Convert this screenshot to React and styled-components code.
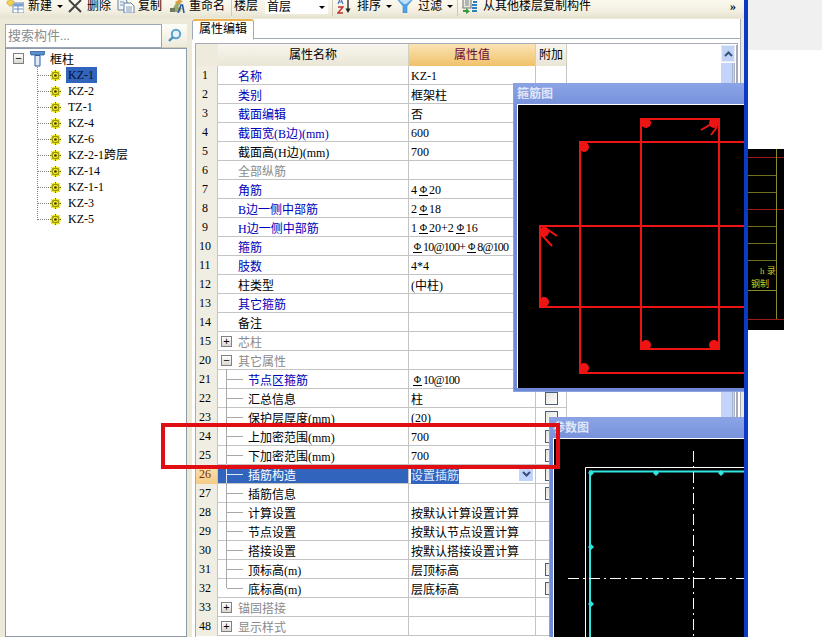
import React from 'react';
import styled, { createGlobalStyle } from 'styled-components';

const GlobalStyle = createGlobalStyle`
  html, body { margin: 0; padding: 0; background: #fff; }
  body {
    font-family: "Liberation Serif", "Noto Sans CJK SC", serif;
    font-size: 12px;
    color: #000;
  }
`;

const treeItems = ['KZ-1', 'KZ-2', 'TZ-1', 'KZ-4', 'KZ-6', 'KZ-2-1跨层', 'KZ-14', 'KZ-1-1', 'KZ-3', 'KZ-5'];

// tone: blue = 公共属性, gray = 分组/不可编辑, plain = 私有属性
const rows = [
  { no: 1, name: '名称', value: 'KZ-1', tone: 'blue' },
  { no: 2, name: '类别', value: '框架柱', tone: 'blue' },
  { no: 3, name: '截面编辑', value: '否', tone: 'blue' },
  { no: 4, name: '截面宽(B边)(mm)', value: '600', tone: 'blue' },
  { no: 5, name: '截面高(H边)(mm)', value: '700', tone: 'plain' },
  { no: 6, name: '全部纵筋', tone: 'gray' },
  { no: 7, name: '角筋', value: ['4', 'Φ', '20'], tone: 'blue' },
  { no: 8, name: 'B边一侧中部筋', value: ['2', 'Φ', '18'], tone: 'blue' },
  { no: 9, name: 'H边一侧中部筋', value: ['1', 'Φ', '20+2', 'Φ', '16'], tone: 'blue' },
  { no: 10, name: '箍筋', value: ['', 'Φ', '10@100+', 'Φ', '8@100'], tone: 'blue' },
  { no: 11, name: '肢数', value: '4*4', tone: 'blue' },
  { no: 12, name: '柱类型', value: '(中柱)', tone: 'plain' },
  { no: 13, name: '其它箍筋', tone: 'blue' },
  { no: 14, name: '备注', tone: 'plain' },
  { no: 15, name: '芯柱', tone: 'gray', group: '+' },
  { no: 20, name: '其它属性', tone: 'gray', group: '−' },
  { no: 21, name: '节点区箍筋', value: ['', 'Φ', '10@100'], tone: 'blue', child: true },
  { no: 22, name: '汇总信息', value: '柱', child: true, check: true },
  { no: 23, name: '保护层厚度(mm)', value: '(20)', child: true, check: true },
  { no: 24, name: '上加密范围(mm)', value: '700', child: true, check: true },
  { no: 25, name: '下加密范围(mm)', value: '700', child: true, check: true },
  { no: 26, name: '插筋构造', value: '设置插筋', child: true, check: true, active: true },
  { no: 27, name: '插筋信息', child: true, check: true },
  { no: 28, name: '计算设置', value: '按默认计算设置计算', child: true },
  { no: 29, name: '节点设置', value: '按默认节点设置计算', child: true },
  { no: 30, name: '搭接设置', value: '按默认搭接设置计算', child: true },
  { no: 31, name: '顶标高(m)', value: '层顶标高', child: true, check: true },
  { no: 32, name: '底标高(m)', value: '层底标高', child: true, check: true, last: true },
  { no: 33, name: '锚固搭接', tone: 'gray', group: '+' },
  { no: 48, name: '显示样式', tone: 'gray', group: '+' },
];

const toneColor = { blue: '#0000b8', gray: '#8a8a8a', plain: '#000' };

const Page = styled.div`
  display: flex;
  width: 822px;
  height: 637px;
  overflow: hidden;
`;

const Main = styled.div`
  position: relative;
  width: 744px;
  height: 637px;
  overflow: hidden;
  background: #ece9d8;
  flex: none;
`;

const BlueEdge = styled.div`
  width: 4px;
  flex: none;
  background: #0b3ac4;
`;

const RightPane = styled.div`
  flex: 1;
  background: #fff;
`;

const GrayStrip = styled.div`
  height: 50px;
  background: #f0f0f0;
  margin-bottom: 99px;
`;

const CadPiece = styled.svg`
  display: block;
  width: 36px;
  height: 181px;
  background: #000;
`;

const Toolbar = styled.div`
  display: flex;
  align-items: flex-start;
  height: 18px;
  background: linear-gradient(#fbf9ef, #f3f0e2 60%, #e6e2cf);
  font-size: 12px;
  line-height: 12px;
  position: relative;
`;

const ToolItem = styled.div`
  display: flex;
  align-items: center;
  height: 12px;
  margin-left: ${p => p.$ml || 0}px;
  white-space: nowrap;
  flex: none;
`;

const ToolLabel = styled.span`
  margin-left: ${p => p.$ml || 0}px;
`;

const Caret = styled.span`
  width: 0;
  height: 0;
  margin-left: ${p => p.$ml || 5}px;
  border-left: 3px solid transparent;
  border-right: 3px solid transparent;
  border-top: 3px solid #000;
`;

const ToolSep = styled.div`
  width: 1px;
  height: 16px;
  margin-left: ${p => p.$ml || 0}px;
  background: #cfcbb6;
  flex: none;
`;

const FloorSelect = styled.div`
  display: flex;
  align-items: center;
  justify-content: space-between;
  width: 63px;
  height: 14px;
  margin-left: 7px;
  padding: 0 3px 0 2px;
  box-sizing: border-box;
  background: #fff;
  flex: none;
`;

const More = styled.span`
  position: absolute;
  left: 730px;
  top: 0;
  font-size: 12px;
  line-height: 12px;
  font-weight: bold;
`;

const Body = styled.div`
  display: flex;
  align-items: flex-start;
  height: 619px;
`;

const LeftPanel = styled.div`
  width: 182px;
  margin: 6px 0 0 5px;
  flex: none;
`;

const SearchRow = styled.div`
  display: flex;
  height: 24px;
  background: #fff;
`;

const SearchInput = styled.div`
  width: 157px;
  height: 24px;
  box-sizing: border-box;
  border: 1px solid #9aa5b5;
  color: #8c8c8c;
  font-size: 13px;
  line-height: 21px;
  padding-left: 2px;
  background: #fff;
`;

const SearchButton = styled.div`
  display: flex;
  align-items: center;
  justify-content: center;
  flex: 1;
  background: linear-gradient(#fdfdf8, #eeebdc);
  border-bottom: 1px solid #cfcbb6;
`;

const TreePanel = styled.div`
  height: 589px;
  box-sizing: border-box;
  background: #fff;
  border: 1px solid #8f9aa8;
  padding: 1px 0 0 7px;
`;

const TreeRoot = styled.div`
  display: flex;
  align-items: center;
  height: 17px;
  font-size: 12px;
`;

const ExpandBox = styled.span`
  display: flex;
  align-items: center;
  justify-content: center;
  width: 9px;
  height: 9px;
  border: 1px solid #808080;
  background: linear-gradient(#fff, #d8d8d0);
  font: 11px/9px "Liberation Sans", sans-serif;
  color: #000;
  flex: none;
`;

const TreeRootLabel = styled.span`
  margin-left: 5px;
`;

const TreeList = styled.div`
  position: relative;
  margin-left: 24px;

  &::before {
    content: '';
    position: absolute;
    left: 0;
    top: 0;
    height: 153px;
    border-left: 1px dotted #808080;
  }
`;

const TreeRow = styled.div`
  display: flex;
  align-items: center;
  height: 16px;
  padding-left: 13px;
  position: relative;

  &::before {
    content: '';
    position: absolute;
    left: 0;
    top: 8px;
    width: 12px;
    border-top: 1px dotted #808080;
  }
`;

const TreeLabel = styled.span`
  margin-left: 5px;
  padding: 0 2px;
  line-height: 16px;
  min-width: 27px;
  background: ${p => (p.$selected ? '#3165bd' : 'transparent')};
  color: ${p => (p.$selected ? '#0a1030' : '#000')};
  white-space: nowrap;
`;

const Editor = styled.div`
  width: 548px;
  margin: 1px 0 0 5px;
  background: #fff;
  height: 618px;
  border-right: 1px solid #a9adb5;
  flex: none;
  box-sizing: content-box;
`;

const TabStrip = styled.div`
  height: 19px;
  border-bottom: 1px solid #a2a9b8;
  background: #fff;
`;

const Tab = styled.div`
  width: 60px;
  height: 18px;
  box-sizing: content-box;
  border: 1px solid #a2a9b8;
  border-top: 2px solid #eeb04a;
  border-bottom: 1px solid #fff;
  border-radius: 3px 3px 0 0;
  text-align: center;
  line-height: 17px;
  background: #fff;
`;

const GridFrame = styled.div`
  display: flex;
  justify-content: space-between;
  margin: 4px 2px 0 3px;
  border: 1px solid #a7abb8;
  border-bottom: none;
  height: 600px;
  box-sizing: border-box;
`;

const Table = styled.div`
  width: 371px;
  flex: none;
`;

const RowGrid = styled.div`
  display: grid;
  grid-template-columns: 22px 191px 127px 31px;
  height: 19px;
  box-sizing: border-box;
  border-bottom: 1px solid #c4c4c4;
`;

const HeaderRow = styled(RowGrid)`
  height: 22px;
  border-bottom: none;
`;

const HeaderCorner = styled.div`
  background: #eeebdc;
`;

const HeaderCell = styled.div`
  display: flex;
  align-items: center;
  justify-content: center;
  padding-bottom: 2px;
  box-sizing: border-box;
  background: ${p => (p.$hot ? 'linear-gradient(#fbe3b4, #f0c26a)' : 'linear-gradient(#f8f6ee, #e9e6d6)')};
  color: ${p => (p.$hot ? '#6a0a3c' : '#000')};
  border-right: 1px solid #d4d0c0;
`;

const NumberCell = styled.div`
  background: ${p => (p.$active ? 'linear-gradient(#fbe3b4, #f3cc86)' : '#f0eee2')};
  color: ${p => (p.$active ? '#7a3000' : '#000')};
  padding-left: ${p => (p.$wide ? 3 : 6)}px;
  line-height: 19px;
  border-right: 1px solid #c4c4c4;
`;

const NameCell = styled.div`
  position: relative;
  display: flex;
  align-items: center;
  height: 18px;
  box-sizing: border-box;
  padding: 2px 0 0 ${p => (p.$child ? 30 : p.$group ? 3 : 20)}px;
  background: ${p => (p.$active ? '#3165bd' : '#fff')};
  color: ${p => (p.$active ? '#fff' : toneColor[p.$tone] || '#000')};
  border-right: 1px solid #c4c4c4;
  white-space: nowrap;
`;

// 树状连线，子行才有
const TreeStem = styled.span`
  position: absolute;
  left: 8px;
  top: -1px;
  bottom: ${p => (p.$last ? '9px' : '-1px')};
  width: 16px;
  border-left: 1px solid ${p => (p.$active ? '#dfe8ff' : '#a8a8a8')};

  &::after {
    content: '';
    position: absolute;
    left: 0;
    top: 10px;
    width: 16px;
    border-top: 1px solid ${p => (p.$active ? '#dfe8ff' : '#a8a8a8')};
  }
`;

const GroupBox = styled(ExpandBox)`
  margin-right: 6px;
  margin-top: -2px;
`;

const ValueCell = styled.div`
  position: relative;
  display: flex;
  align-items: center;
  height: 18px;
  box-sizing: border-box;
  padding: 2px 0 0 2px;
  background: #fff;
  border-right: 1px solid #c4c4c4;
  white-space: nowrap;
`;

const Rebar = styled.span`
  display: inline-block;
  width: 9px;
  text-align: center;
  line-height: 11px;
  border-bottom: 1px solid #000;
  font-size: 10px;
  margin: 0 1px 0 2px;
`;

const ValuePart = styled.span`
  letter-spacing: ${p => (p.$tight ? '-0.8px' : '0')};
`;

const SelectedText = styled.span`
  background: #3165bd;
  color: #dfe8ff;
`;

const ComboArrow = styled.span`
  position: absolute;
  right: 2px;
  top: 2px;
  display: flex;
  align-items: center;
  justify-content: center;
  width: 14px;
  height: 14px;
  background: #c3d3fb;
`;

const AttachCell = styled.div`
  display: flex;
  align-items: center;
  justify-content: center;
  height: 18px;
  background: #fff;
  border-right: 1px solid #c4c4c4;
`;

const CheckBox = styled.span`
  width: 11px;
  height: 11px;
  border: 1px solid #47607f;
  background: linear-gradient(135deg, #e4e4de, #fff);
`;

const ScrollBar = styled.div`
  width: 14px;
  display: flex;
  flex-direction: column;
  margin-top: 1px;
  flex: none;
  border-right: 1px solid #a7abb8;
  padding-right: 1px;
`;

const ScrollButton = styled.div`
  display: flex;
  align-items: center;
  justify-content: center;
  height: 15px;
  background: #c3d3f6;
  border: 1px solid #e6ecfb;
`;

const ScrollThumb = styled.div`
  flex: 1;
  margin-top: 1px;
  background: #c3d3fb;
  border-right: 3px double #a9b4cc;
`;

const FloatWindow = styled.div`
  position: absolute;
  left: ${p => p.$left}px;
  top: ${p => p.$top}px;
  width: ${p => p.$width}px;
  height: ${p => p.$height}px;
  box-sizing: border-box;
  background: linear-gradient(#8aa3e6, #6f8ad6 30px);
  border: 1px solid #8ba2df;
  border-right: none;
  padding: 0 0 4px 3px;
  z-index: 2;
`;

const FloatTitle = styled.div`
  height: 20px;
  line-height: 21px;
  color: #dfe6f8;
  font-weight: bold;
  font-size: 12px;
`;

const CadCanvas = styled.svg`
  display: block;
  width: 100%;
  height: ${p => p.$height}px;
  background: #000;
  border-top: 1px solid #fff;
  border-left: 1px solid #fff;
  box-sizing: border-box;
`;

const RedFrame = styled.div`
  position: absolute;
  left: 161px;
  top: 423px;
  width: 399px;
  height: 46px;
  box-sizing: border-box;
  border: 4px solid #e00d12;
  z-index: 3;
`;

const NewIcon = () => (
  <svg width="18" height="14" viewBox="0 0 18 14">
    <rect x="7" y="4" width="11" height="10" fill="#fff" stroke="#6f8fb8" />
    <rect x="7.5" y="4.5" width="10" height="3" fill="#7aa0d8" />
    <path d="M8 10h9M12 7v7" stroke="#6f8fb8" />
    <path d="M3 0h3v2h2v3H6v2H3V5H1V2h2z" fill="#f6d24a" stroke="#c89a20" strokeWidth=".5" />
  </svg>
);

const DeleteIcon = () => (
  <svg width="14" height="14" viewBox="0 0 14 14">
    <path d="M1 1l12 12M13 1L1 13" stroke="#444" strokeWidth="2" />
  </svg>
);

const CopyIcon = () => (
  <svg width="18" height="14" viewBox="0 0 18 14">
    <path d="M1 0h7l2 2v9H1z" fill="#eef3fa" stroke="#6f8298" />
    <path d="M7 4h7l3 3v7H7z" fill="#fff" stroke="#5a7fb0" />
    <path d="M3 3h4M3 6h3M9 8h6M9 10h6M9 12h6" stroke="#7f95b0" />
  </svg>
);

const RenameIcon = () => (
  <svg width="16" height="14" viewBox="0 0 16 14">
    <path d="M2 13L8 2l4 2-3 4 4 1-2 4z" fill="#9caa6c" />
    <path d="M6 3l5-3 3 3-6 2z" fill="#e0a040" />
    <path d="M9 14l3-8h1.5l1.5 8" fill="none" stroke="#2a56a8" strokeWidth="1.6" />
    <path d="M1 9h5v4H1z" fill="#707a60" />
  </svg>
);

const SortIcon = () => (
  <svg width="14" height="16" viewBox="0 0 14 16">
    <path d="M1 6l2.5-6L6 6M2 4h3" fill="none" stroke="#4a74c8" strokeWidth="1.2" />
    <path d="M1 9h5L1 15h5" fill="none" stroke="#c03030" strokeWidth="1.4" />
    <path d="M11 2v11" stroke="#222" strokeWidth="1.3" />
    <path d="M8.5 10.5L11 15l2.5-4.5z" fill="#222" />
  </svg>
);

const FilterIcon = () => (
  <svg width="16" height="14" viewBox="0 0 16 14">
    <path d="M0 0h16L10 7v7H6V7z" fill="#4fa4e8" stroke="#2f78c0" strokeWidth=".5" />
    <path d="M2 1h12L9 5H7z" fill="#bfe0fa" />
  </svg>
);

const CopyFloorIcon = () => (
  <svg width="16" height="16" viewBox="0 0 16 16">
    <rect x="1" y="0" width="8" height="10" fill="#e8e8e0" stroke="#707070" />
    <path d="M3 3h4M3 5h4M3 7h4" stroke="#808080" />
    <path d="M1 12h3v-2l4 3.5L4 16v-2H1z" fill="#3a9a40" />
    <path d="M11 4h4M10 7h5M10 10h5M10 13h5" stroke="#2f7fc4" strokeWidth="2" />
  </svg>
);

const SearchIcon = () => (
  <svg width="15" height="15" viewBox="0 0 15 15">
    <circle cx="9" cy="6" r="4.2" fill="#e6f3fb" stroke="#5aa2d0" strokeWidth="2" />
    <path d="M6 9l-4 4" stroke="#4a8fc0" strokeWidth="2.4" />
  </svg>
);

const ColumnIcon = () => (
  <svg width="15" height="16" viewBox="0 0 15 16" style={{ marginLeft: 6 }}>
    <path d="M0 .5h15l-1 3.5H1z" fill="#5c8fd0" stroke="#2c5e9c" strokeWidth=".8" />
    <path d="M5 4.500h5V15H5z" fill="#dceafa" stroke="#2c5e9c" />
  </svg>
);

const GearIcon = () => (
  <svg width="11" height="11" viewBox="0 0 11 11" style={{ flex: 'none' }}>
    <circle cx="5.500" cy="5.500" r="5.300" fill="#f4ee10" />
    <path d="M5.500 0v11M0 5.500h11M1.600 1.600l7.800 7.800M9.400 1.600l-7.800 7.800" stroke="#4a4a10" strokeWidth=".8" strokeDasharray="1.400 1" />
    <circle cx="5.500" cy="5.500" r="3.300" fill="#f6f020" stroke="#3a3a10" strokeWidth=".6" />
    <circle cx="5.500" cy="5.500" r="1.300" fill="#303010" />
  </svg>
);

const Chevron = ({ color }) => (
  <svg width="9" height="6" viewBox="0 0 9 6">
    <path d="M1 5l3.500-3.500L8 5" fill="none" stroke={color} strokeWidth="2" />
  </svg>
);

const ChevronDown = () => (
  <svg width="9" height="6" viewBox="0 0 9 6">
    <path d="M1 1l3.500 3.500L8 1" fill="none" stroke="#34507c" strokeWidth="2" />
  </svg>
);

// 箍筋图，坐标相对黑色画布左上角
const hoopDots = [[128, 18], [196, 18], [66, 42], [26, 127], [26, 197], [128, 240], [196, 240], [66, 263]];

const HoopDrawing = () => (
  <CadCanvas $height={284} viewBox="0 0 226 283">
    <g fill="none" stroke="#ee1414" strokeWidth="2">
      <rect x="123" y="14" width="78" height="230" />
      <path d="M226 37H62V268H226" />
      <path d="M226 121H22V202H226" />
      <path d="M200 15l-17 10M199 22l-6 8" />
      <path d="M26 122l13 9M22 128l12 13" />
    </g>
    {hoopDots.map(([x, y]) => (
      <circle key={`${x}-${y}`} cx={x} cy={y} r="5" fill="#ee1414" />
    ))}
  </CadCanvas>
);

const sectionDots = [[37, 34], [102, 34], [167, 34], [37, 108], [37, 165]];

const SectionDrawing = () => (
  <CadCanvas $height={199} viewBox="0 0 190 198">
    <path d="M190 28.500H31.500V198" fill="none" stroke="#fff" />
    <path d="M190 32.500H36V198" fill="none" stroke="#2fe6e0" strokeWidth="2" />
    {sectionDots.map(([x, y]) => (
      <path key={x + y} d={`M${x - 3} ${y}l3-3 3 3-3 3z`} fill="#2fe6e0" />
    ))}
    <path d="M139.500 12V198" stroke="#fff" strokeDasharray="11 4 2 4" />
    <path d="M14 139.500H190" stroke="#fff" strokeDasharray="11 4 2 4" />
  </CadCanvas>
);

const CadScrap = () => (
  <CadPiece viewBox="0 0 36 181">
    {[8, 60, 170].map(y => <path key={y} d={`M0 ${y}.5H36`} stroke="#a01818" />)}
    {[26, 43, 77, 94, 111].map(y => <path key={y} d={`M0 ${y}.5H29`} stroke="#70701c" />)}
    <path d="M0 141.500H29M28.500 0V170" stroke="#8a8a28" />
    <text x="12" y="125" fontSize="9" fill="#c8c820">h 录</text>
    <text x="3" y="138" fontSize="9" fill="#c8c820">钢制</text>
  </CadPiece>
);

const Value = ({ value }) => {
  if (!Array.isArray(value)) return value || null;
  return value.map((part, i) => (part === 'Φ'
    ? <Rebar key={i}>Φ</Rebar>
    : <ValuePart key={i} $tight={part.includes('@')}>{part}</ValuePart>));
};

const PropertyRow = ({ row }) => (
  <RowGrid>
    <NumberCell $active={row.active} $wide={row.no > 9}>{row.no}</NumberCell>
    <NameCell $child={row.child} $group={row.group} $tone={row.tone} $active={row.active}>
      {row.child && <TreeStem $last={row.last} $active={row.active} />}
      {row.group && <GroupBox>{row.group}</GroupBox>}
      {row.name}
    </NameCell>
    <ValueCell>
      {row.active ? <SelectedText>{row.value}</SelectedText> : <Value value={row.value} />}
      {row.active && <ComboArrow><ChevronDown /></ComboArrow>}
    </ValueCell>
    <AttachCell>{row.check && <CheckBox />}</AttachCell>
  </RowGrid>
);

export default function App() {
  return (
    <>
      <GlobalStyle />
      <Page>
        <Main>
          <Toolbar>
            <ToolItem $ml={6}><NewIcon /><ToolLabel $ml={4}>新建</ToolLabel><Caret /></ToolItem>
            <ToolItem $ml={5}><DeleteIcon /><ToolLabel $ml={5}>删除</ToolLabel></ToolItem>
            <ToolItem $ml={6}><CopyIcon /><ToolLabel $ml={3}>复制</ToolLabel></ToolItem>
            <ToolItem $ml={7}><RenameIcon /><ToolLabel $ml={4}>重命名</ToolLabel></ToolItem>
            <ToolSep $ml={6} />
            <ToolItem $ml={2}>楼层</ToolItem>
            <FloorSelect>首层<Caret /></FloorSelect>
            <ToolSep $ml={4} />
            <ToolItem $ml={4}><SortIcon /><ToolLabel $ml={6}>排序</ToolLabel><Caret /></ToolItem>
            <ToolItem $ml={5}><FilterIcon /><ToolLabel $ml={5}>过滤</ToolLabel><Caret /></ToolItem>
            <ToolSep $ml={4} />
            <ToolItem $ml={4}><CopyFloorIcon /><ToolLabel $ml={5}>从其他楼层复制构件</ToolLabel></ToolItem>
            <More>»</More>
          </Toolbar>
          <Body>
            <LeftPanel>
              <SearchRow>
                <SearchInput>搜索构件...</SearchInput>
                <SearchButton><SearchIcon /></SearchButton>
              </SearchRow>
              <TreePanel>
                <TreeRoot>
                  <ExpandBox>−</ExpandBox>
                  <ColumnIcon />
                  <TreeRootLabel>框柱</TreeRootLabel>
                </TreeRoot>
                <TreeList>
                  {treeItems.map((item, i) => (
                    <TreeRow key={item}>
                      <GearIcon />
                      <TreeLabel $selected={i === 0}>{item}</TreeLabel>
                    </TreeRow>
                  ))}
                </TreeList>
              </TreePanel>
            </LeftPanel>
            <Editor>
              <TabStrip><Tab>属性编辑</Tab></TabStrip>
              <GridFrame>
                <Table>
                  <HeaderRow>
                    <HeaderCorner />
                    <HeaderCell>属性名称</HeaderCell>
                    <HeaderCell $hot>属性值</HeaderCell>
                    <HeaderCell>附加</HeaderCell>
                  </HeaderRow>
                  {rows.map(row => <PropertyRow key={row.no} row={row} />)}
                </Table>
                <ScrollBar>
                  <ScrollButton><Chevron color="#34507c" /></ScrollButton>
                  <ScrollThumb />
                </ScrollBar>
              </GridFrame>
            </Editor>
          </Body>
          <FloatWindow $left={513} $top={83} $width={231} $height={309}>
            <FloatTitle>箍筋图</FloatTitle>
            <HoopDrawing />
          </FloatWindow>
          <FloatWindow $left={549} $top={417} $width={195} $height={230}>
            <FloatTitle>参数图</FloatTitle>
            <SectionDrawing />
          </FloatWindow>
          <RedFrame />
        </Main>
        <BlueEdge />
        <RightPane>
          <GrayStrip />
          <CadScrap />
        </RightPane>
      </Page>
    </>
  );
}
